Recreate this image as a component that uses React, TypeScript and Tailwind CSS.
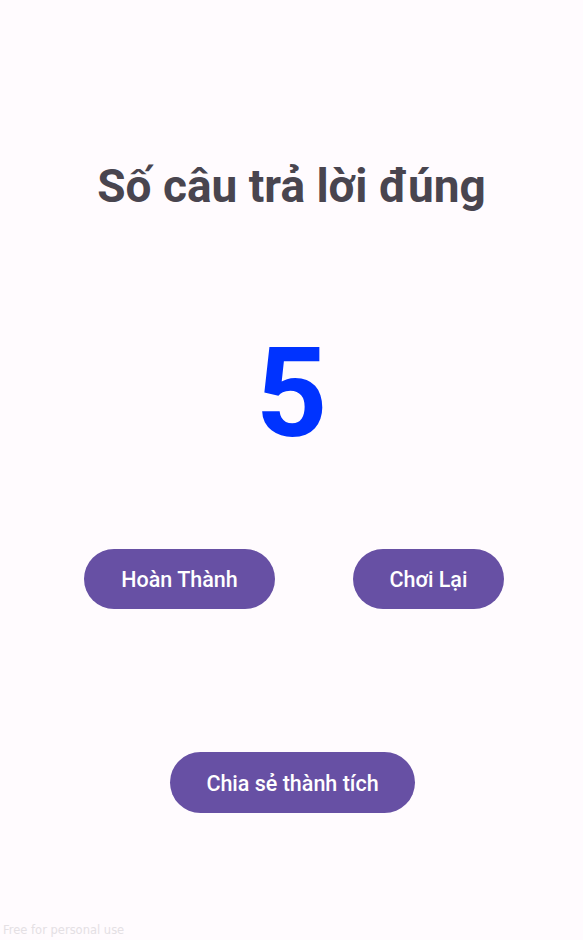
export default function App() {
  return (
    <div
      className="relative flex h-[940px] w-[583px] flex-col items-center bg-[#FFFBFE]"
      style={{ fontFamily: "Roboto, 'Noto Sans', sans-serif" }}
    >
      <h1 className="mt-[156px] text-[46px] font-bold leading-[60px] text-[#49454F]">
        Số câu trả lời đúng
      </h1>
      <div className="mt-[115px] text-[125px] font-bold leading-[125px] text-[#0033FF]">5</div>
      <div className="mt-[93px] flex w-full pl-[84px] gap-[78px]">
        <button className="h-[60px] w-[191px] rounded-full bg-[#6750A4] pt-[3px] text-[21.5px] font-medium text-white">
          Hoàn Thành
        </button>
        <button className="h-[60px] w-[151px] rounded-full bg-[#6750A4] pt-[3px] text-[21.5px] font-medium text-white">
          Chơi Lại
        </button>
      </div>
      <button className="ml-[2px] mt-[143px] h-[61px] w-[245px] rounded-full bg-[#6750A4] pt-[3px] text-[21.5px] font-medium text-white">
        Chia sẻ thành tích
      </button>
      <div
        className="absolute bottom-[1px] left-[3px] text-[11.5px] text-[#e4e0e4]"
        style={{ fontFamily: "'DejaVu Sans', sans-serif" }}
      >
        Free for personal use
      </div>
    </div>
  );
}
